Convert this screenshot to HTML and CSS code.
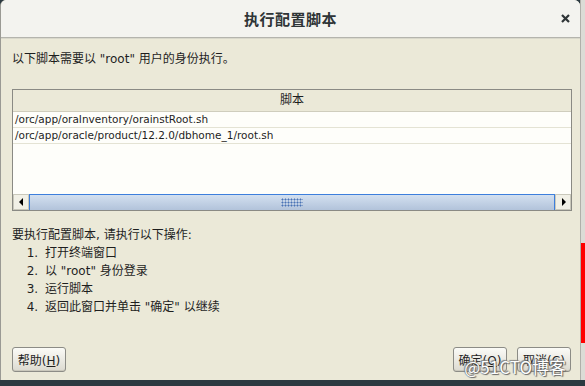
FILE: index.html
```html
<!DOCTYPE html>
<html lang="zh-CN">
<head>
  <meta charset="UTF-8">
  <meta name="viewport" content="width=device-width, initial-scale=1.0">
  <title>执行配置脚本</title>
  <link rel="stylesheet" href="styles.css">
</head>
<body>

  <div class="screen">
    <div class="row">
      <div class="dialog">
        <div class="titlebar">
          <span></span>
          <h1>执行配置脚本</h1>
          <svg class="close" width="9" height="9" viewBox="0 0 9 9">
            <path d="M1 1 L8 8 M8 1 L1 8" stroke="#2e3436" stroke-width="2.2" fill="none"/>
          </svg>
        </div>

        <div class="content">
          <p class="intro">以下脚本需要以 "root" 用户的身份执行。</p>

          <div class="table">
            <div class="thead">脚本</div>
            <div class="trow">/orc/app/oraInventory/orainstRoot.sh</div>
            <div class="trow">/orc/app/oracle/product/12.2.0/dbhome_1/root.sh</div>
            <div class="tfill"></div>
            <div class="hscroll">
              <div class="arrow left"></div>
              <div class="thumb"><span class="grip"></span></div>
              <div class="arrow right"></div>
            </div>
          </div>

          <div class="steps">
            <p>要执行配置脚本, 请执行以下操作:</p>
            <ol>
              <li>打开终端窗口</li>
              <li>以 "root" 身份登录</li>
              <li>运行脚本</li>
              <li>返回此窗口并单击 "确定" 以继续</li>
            </ol>
          </div>

          <div class="buttons">
            <button class="btn">帮助(<u>H</u>)</button>
            <span class="spacer"></span>
            <button class="btn">确定(<u>O</u>)</button>
            <button class="btn">取消(<u>C</u>)</button>
          </div>
        </div>

        <div class="watermark">@51CTO博客</div>
      </div>

      <div class="side">
        <div class="side-top"></div>
        <div class="side-red"></div>
      </div>
    </div>
    <div class="taskbar"></div>
  </div>

</body>
</html>
```

FILE: styles.css
```css
:root {
  --dialog-bg: #ebe9d8;
  --title-bg: #f3f3ef;
  --text: #1e1e1e;
  --border: #8a8a84;
  --cjk: "DejaVu Sans", "Noto Sans CJK SC", sans-serif;
}

* {
  box-sizing: border-box;
}

body {
  margin: 0;
  font-family: var(--cjk);
  font-size: 12px;
  color: var(--text);
  background: #2c3a41;
}

.screen {
  width: 585px;
  height: 386px;
  display: flex;
  flex-direction: column;
  overflow: hidden;
}

.row {
  display: flex;
  height: 380px;
}

/* dialog window */
.dialog {
  position: relative;
  width: 580px;
  display: flex;
  flex-direction: column;
  background: var(--dialog-bg);
  border-left: 1px solid #9a9a94;
  border-radius: 6px 6px 0 0;
  overflow: hidden;
}

.titlebar {
  height: 38px;
  display: grid;
  grid-template-columns: 1fr auto 1fr;
  align-items: center;
  background: var(--title-bg);
  border-bottom: 1px solid #b4b4ad;
  box-shadow: 0 1px 0 #d9d8cb;
}

.titlebar h1 {
  margin: 0;
  font-size: 15px;
  font-weight: bold;
  color: #2e3436;
  letter-spacing: 0.5px;
}

.close {
  justify-self: end;
  margin-right: 10px;
}

.content {
  flex: 1;
  display: flex;
  flex-direction: column;
  padding: 0 8px 8px 11px;
}

.intro {
  margin: 14px 0 0;
  line-height: 14px;
}

/* script table */
.table {
  margin-top: 23px;
  height: 122px;
  display: flex;
  flex-direction: column;
  border: 1px solid var(--border);
  background: #fefefa;
}

.thead {
  height: 22px;
  line-height: 21px;
  text-align: center;
  background: #ebe9d8;
  border-bottom: 1px solid #cfcdbd;
}

.trow {
  height: 16px;
  line-height: 15px;
  padding-left: 2px;
  font-size: 10.5px;
  border-bottom: 1px solid #e4e3d4;
}

.tfill {
  flex: 1;
}

.hscroll {
  height: 16px;
  display: flex;
}

.arrow {
  width: 16px;
  background: #f1f0e6;
  border: 1px solid #c9c8bb;
  position: relative;
}

.arrow::after {
  content: "";
  position: absolute;
  top: 3px;
  border-top: 4px solid transparent;
  border-bottom: 4px solid transparent;
}

.arrow.left::after {
  left: 5px;
  border-right: 4px solid #000;
}

.arrow.right::after {
  left: 6px;
  border-left: 4px solid #000;
}

.thumb {
  flex: 1;
  display: flex;
  align-items: center;
  justify-content: center;
  background: linear-gradient(#d3e0f0, #b2c3da);
  border: 1px solid #3d7fdc;
  border-bottom: none;
}

.grip {
  width: 22px;
  height: 9px;
  background-image: radial-gradient(circle, #4a73b5 0.8px, transparent 1.2px);
  background-size: 3px 3px;
}

/* instructions */
.steps {
  margin-top: 15px;
  line-height: 18px;
}

.steps p {
  margin: 0;
}

.steps ol {
  margin: 0;
  padding-left: 30px;
}

.steps li {
  padding-left: 3px;
}

.buttons {
  margin-top: auto;
  display: flex;
  gap: 10px;
  padding-right: 1px;
}

.spacer {
  flex: 1;
}

.btn {
  width: 54px;
  height: 25px;
  padding: 0;
  font-family: var(--cjk);
  font-size: 12px;
  color: var(--text);
  background: linear-gradient(#fbfbf7, #dcdad0);
  border: 1px solid #8c8c86;
  border-radius: 3px;
  box-shadow: inset 0 -1px 0 #cac8bc;
}

.watermark {
  position: absolute;
  right: 14px;
  bottom: 1px;
  font-family: "Noto Sans CJK SC", sans-serif;
  font-size: 17px;
  color: #fff;
  text-shadow: 0 0 1px #555, 1px 1px 1px #666, -1px -1px 1px #888;
}

/* background window peeking out on the right */
.side {
  width: 5px;
  display: flex;
  flex-direction: column;
  background: #dcdcd6;
  border-left: 1px solid #b0b0aa;
}

.side-top {
  height: 243px;
}

.side-red {
  height: 100px;
  background: #ff0000;
}

.taskbar {
  height: 6px;
  background: #2c3a41;
}
```
